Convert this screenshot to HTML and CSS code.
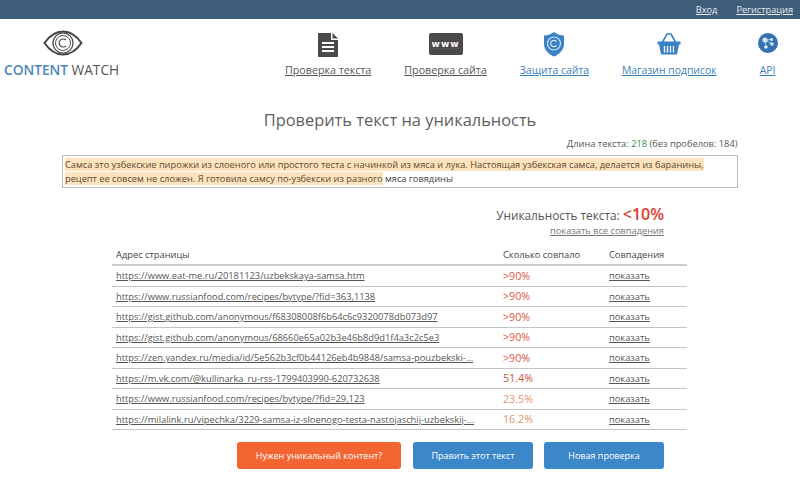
FILE: index.html
```html
<!DOCTYPE html>
<html lang="ru">
<head>
    <meta charset="UTF-8">
    <title>Content Watch</title>
    <link rel="stylesheet" href="styles.css">
</head>
<body>
    <div class="topbar">
        <a href="#">Вход</a>
        <a href="#">Регистрация</a>
    </div>

    <div class="header">
        <div class="logo">
            <svg class="logo-eye" width="40" height="26" viewBox="0 0 40 26">
                <path d="M1.5 13C7 5 13 1.5 20 1.5S33 5 38.500 13C33 21 27 24.500 20 24.500S7 21 1.500 13Z" fill="none" stroke="#444" stroke-width="2"/>
                <circle cx="20" cy="13" r="10" fill="none" stroke="#444" stroke-width="1.200"/>
                <circle cx="20" cy="13" r="7.500" fill="none" stroke="#555" stroke-width="1"/>
                <path d="M23 10.200A4 4 0 1 0 23 15.800" fill="none" stroke="#444" stroke-width="1.200"/>
            </svg>
            <div class="logo-text"><b>CONTENT</b> WATCH</div>
        </div>
        <div class="nav">
            <a class="nav-item" href="#">
                <svg width="22" height="24" viewBox="0 0 22 24">
                    <path d="M1 0H14V7H21V24H1Z" fill="#4a4a4a"/>
                    <path d="M15.500 0L21 5.500H15.500Z" fill="#4a4a4a"/>
                    <path d="M5 10H17M5 14H17M5 18H17" stroke="#fff" stroke-width="2"/>
                </svg>
                <span>Проверка текста</span>
            </a>
            <a class="nav-item" href="#">
                <span class="www">www</span>
                <span>Проверка сайта</span>
            </a>
            <a class="nav-item blue" href="#">
                <svg width="22" height="25" viewBox="0 0 22 25">
                    <path d="M11 0C14 2.500 18 3.500 21 3.500V12C21 18 16 22.500 11 24.500C6 22.500 1 18 1 12V3.500C4 3.500 8 2.500 11 0Z" fill="#3b82c4"/>
                    <circle cx="11" cy="11.500" r="6.500" fill="none" stroke="#cfe3f5" stroke-width="1.200"/>
                    <path d="M13.500 9.700A3.200 3.200 0 1 0 13.500 13.300" fill="none" stroke="#cfe3f5" stroke-width="1.200"/>
                </svg>
                <span>Защита сайта</span>
            </a>
            <a class="nav-item blue" href="#">
                <svg class="icon-basket" width="24" height="22" viewBox="0 0 24 22">
                    <path d="M5 10L10 1H14L19 10" fill="none" stroke="#3b82c4" stroke-width="1.600"/>
                    <path d="M0.500 8.500H23.500V11.500H22L20 21.500H4L2 11.500H0.500Z" fill="#3b82c4"/>
                    <path d="M7.500 13V19.500M10.500 13V19.500M13.500 13V19.500M16.500 13V19.500" stroke="#fff" stroke-width="1.300"/>
                </svg>
                <span>Магазин подписок</span>
            </a>
            <a class="nav-item blue api" href="#">
                <svg class="icon-api" width="20" height="20" viewBox="0 0 20 20">
                    <circle cx="10" cy="10" r="10" fill="#3570b0"/>
                    <circle cx="7" cy="7" r="2.600" fill="#d5e6f5"/>
                    <circle cx="13.500" cy="6.500" r="1.500" fill="#d5e6f5"/>
                    <circle cx="14" cy="11" r="1.800" fill="#d5e6f5"/>
                    <circle cx="8" cy="14" r="1.800" fill="#d5e6f5"/>
                    <path d="M7 7L13.500 6.500M7 7L14 11M7 7L8 14" stroke="#d5e6f5" stroke-width="0.700"/>
                </svg>
                <span>API</span>
            </a>
        </div>
    </div>

    <div class="content">
        <h1>Проверить текст на уникальность</h1>
        <div class="text-length">Длина текста: <span class="green">218</span> (без пробелов: 184)</div>
        <div class="text-box"><mark>Самса это узбекские пирожки из слоеного или простого теста с начинкой из мяса и лука. Настоящая узбекская самса, делается из баранины, рецепт ее совсем не сложен. Я готовила самсу по-узбекски из разного</mark> мяса говядины</div>

        <div class="results">
            <div class="uniq">Уникальность текста: <span class="uniq-value">&lt;10%</span></div>
            <a class="show-all" href="#">показать все совпадения</a>

            <table>
                <thead>
                    <tr>
                        <th>Адрес страницы</th>
                        <th class="col-percent">Сколько совпало</th>
                        <th class="col-show">Совпадения</th>
                    </tr>
                </thead>
                <tbody>
                    <tr>
                        <td><a href="#">https://www.eat-me.ru/20181123/uzbekskaya-samsa.htm</a></td>
                        <td class="pct high">&gt;90%</td>
                        <td><a href="#">показать</a></td>
                    </tr>
                    <tr>
                        <td><a href="#">https://www.russianfood.com/recipes/bytype/?fid=363,1138</a></td>
                        <td class="pct high">&gt;90%</td>
                        <td><a href="#">показать</a></td>
                    </tr>
                    <tr>
                        <td><a href="#">https://gist.github.com/anonymous/f68308008f6b64c6c9320078db073d97</a></td>
                        <td class="pct high">&gt;90%</td>
                        <td><a href="#">показать</a></td>
                    </tr>
                    <tr>
                        <td><a href="#">https://gist.github.com/anonymous/68660e65a02b3e46b8d9d1f4a3c2c5e3</a></td>
                        <td class="pct high">&gt;90%</td>
                        <td><a href="#">показать</a></td>
                    </tr>
                    <tr>
                        <td><a href="#">https://zen.yandex.ru/media/id/5e562b3cf0b44126eb4b9848/samsa-pouzbekski-...</a></td>
                        <td class="pct high">&gt;90%</td>
                        <td><a href="#">показать</a></td>
                    </tr>
                    <tr>
                        <td><a href="#">https://m.vk.com/@kullinarka_ru-rss-1799403990-620732638</a></td>
                        <td class="pct mid">51.4%</td>
                        <td><a href="#">показать</a></td>
                    </tr>
                    <tr>
                        <td><a href="#">https://www.russianfood.com/recipes/bytype/?fid=29,123</a></td>
                        <td class="pct low">23.5%</td>
                        <td><a href="#">показать</a></td>
                    </tr>
                    <tr>
                        <td><a href="#">https://milalink.ru/vipechka/3229-samsa-iz-sloenogo-testa-nastojaschij-uzbekskij-...</a></td>
                        <td class="pct low">16.2%</td>
                        <td><a href="#">показать</a></td>
                    </tr>
                </tbody>
            </table>
        </div>

        <div class="buttons">
            <a class="btn btn-orange" href="#">Нужен уникальный контент?</a>
            <a class="btn" href="#">Править этот текст</a>
            <a class="btn" href="#">Новая проверка</a>
        </div>
    </div>
</body>
</html>
```

FILE: styles.css
```css
html, body {
    margin: 0;
    padding: 0;
}
body {
    font-family: 'Open Sans', sans-serif;
    font-size: 9.300px;
    color: #555;
    background-color: #fff;
    height: 477px;
    overflow: hidden;
}
a {
    color: #555;
}
.topbar {
    height: 19px;
    background-color: #3f5d78;
    display: flex;
    justify-content: flex-end;
    align-items: center;
    gap: 19px;
    padding-right: 7px;
    font-size: 9.200px;
}
.topbar a {
    color: #e6edf3;
}
.header {
    display: flex;
    height: 62px;
    padding-left: 4px;
}
.logo {
    width: 115px;
    padding-top: 11px;
    text-align: center;
}
.logo-eye {
    display: block;
    margin: 0 auto;
    transform: translateX(1px);
}
.logo-text {
    font-size: 13.700px;
    line-height: 20px;
    margin-top: 4px;
    white-space: nowrap;
    color: #555;
}
.logo-text b {
    font-weight: 600;
    color: #4a86b8;
}
.nav {
    margin-left: 166px;
    display: flex;
    gap: 33px;
}
.nav-item {
    display: flex;
    flex-direction: column;
    align-items: center;
    justify-content: flex-end;
    height: 60px;
    font-size: 10.700px;
    line-height: 18px;
    white-space: nowrap;
}
.nav-item svg, .www {
    margin-bottom: 4px;
}
.nav-item.blue {
    color: #3b7fb8;
    font-size: 10.400px;
}
.nav-item.api {
    margin-left: 8px;
}
.nav-item .www {
    margin-bottom: 6px;
}
.nav-item .icon-basket {
    margin-bottom: 6px;
}
.nav-item .icon-api {
    margin-bottom: 8px;
}
.www {
    width: 34px;
    height: 22px;
    background-color: #4a4a4a;
    border-radius: 2px;
    color: #fff;
    font-family: 'DejaVu Sans', sans-serif;
    font-size: 9px;
    font-weight: bold;
    letter-spacing: 1px;
    line-height: 22px;
    text-align: center;
}
.content {
    padding-top: 27px;
}
h1 {
    margin: 0;
    font-size: 16.400px;
    font-weight: 400;
    line-height: 24px;
    text-align: center;
    color: #606060;
}
.text-length {
    width: 675px;
    margin: 5px auto 0;
    text-align: right;
    font-size: 9.300px;
    line-height: 14px;
}
.green {
    color: #3c8c4a;
}
.text-box {
    box-sizing: border-box;
    width: 676px;
    height: 33px;
    margin: 4px 0 0 62px;
    padding: 2px 2px 0;
    border: 1px solid #bbb;
    font-size: 9.250px;
    line-height: 14px;
    color: #444;
}
mark {
    background-color: #fce3bd;
    color: #5a4a30;
}
.results {
    width: 575px;
    margin: 16px 0 0 112px;
    text-align: right;
}
.uniq {
    padding-right: 23px;
    font-size: 11.800px;
    line-height: 20px;
}
.uniq-value {
    font-size: 16px;
    font-weight: 600;
    color: #e03a2a;
}
.show-all {
    display: block;
    padding-right: 23px;
    font-size: 9.250px;
    line-height: 12px;
    color: #777;
}
table {
    width: 100%;
    margin-top: 8px;
    border-collapse: collapse;
    table-layout: fixed;
    text-align: left;
    font-size: 9.300px;
}
th {
    height: 19px;
    padding: 0 0 0 4px;
    font-weight: 400;
    color: #444;
    border-bottom: 2px solid #ccc;
}
td {
    height: 19.500px;
    padding: 0 0 0 4px;
    border-bottom: 1px solid #c4c4c4;
    white-space: nowrap;
}
.col-percent {
    width: 102px;
}
.col-show {
    width: 78px;
}
.pct {
    font-size: 10.700px;
}
.high {
    color: #d9583e;
}
.mid {
    color: #c9503f;
}
.low {
    color: #e0966a;
}
.buttons {
    display: flex;
    gap: 12px;
    margin: 12px 0 0 237px;
}
.btn {
    width: 120px;
    height: 27px;
    border-radius: 3px;
    background-color: #3b87c8;
    color: #fff;
    font-size: 9px;
    font-weight: 500;
    line-height: 27px;
    text-align: center;
    text-decoration: none;
}
.btn-orange {
    width: 164px;
    background-color: #f26532;
}
.btn:last-child {
    margin-left: -1px;
}
```
